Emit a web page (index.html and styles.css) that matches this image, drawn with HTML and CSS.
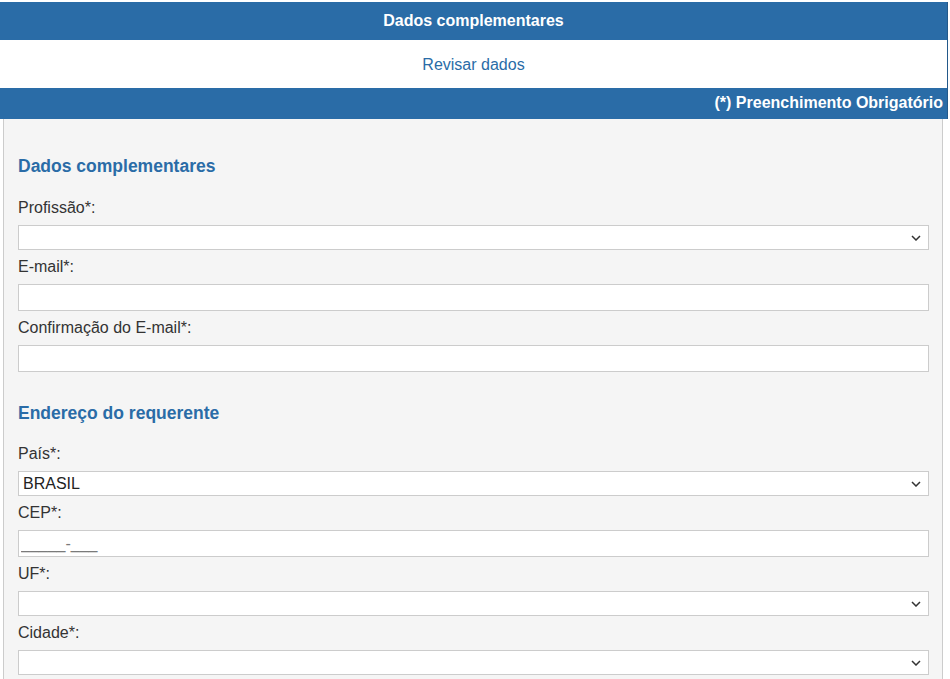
FILE: index.html
```html
<!DOCTYPE html>
<html lang="pt-BR">
<head>
<meta charset="utf-8">
<title>Dados complementares</title>
<link rel="stylesheet" href="styles.css">
</head>
<body>
<div class="page">
  <div class="frame">
    <div class="bar bar-title">Dados complementares</div>
    <div class="review"><a href="#" class="review-link">Revisar dados</a></div>
    <div class="bar bar-note">(*) Preenchimento Obrigatório</div>
  </div>
  <div class="panel">
    <h2 class="section-title first">Dados complementares</h2>
    <div class="field">
      <label class="label">Profissão*:</label>
      <div class="select-wrap">
        <select class="select"><option></option></select>
        <svg class="chevron" width="10" height="6" viewBox="0 0 10 6"><path d="M1 1 L5 5 L9 1" fill="none" stroke="#333" stroke-width="1.5"/></svg>
      </div>
    </div>
    <div class="field">
      <label class="label">E-mail*:</label>
      <input class="input" type="text">
    </div>
    <div class="field">
      <label class="label">Confirmação do E-mail*:</label>
      <input class="input" type="text">
    </div>

    <h2 class="section-title">Endereço do requerente</h2>
    <div class="field">
      <label class="label">País*:</label>
      <div class="select-wrap">
        <select class="select"><option>BRASIL</option></select>
        <svg class="chevron" width="10" height="6" viewBox="0 0 10 6"><path d="M1 1 L5 5 L9 1" fill="none" stroke="#333" stroke-width="1.5"/></svg>
      </div>
    </div>
    <div class="field">
      <label class="label">CEP*:</label>
      <input class="input cep" type="text" placeholder="_____-___">
    </div>
    <div class="field">
      <label class="label">UF*:</label>
      <div class="select-wrap">
        <select class="select"><option></option></select>
        <svg class="chevron" width="10" height="6" viewBox="0 0 10 6"><path d="M1 1 L5 5 L9 1" fill="none" stroke="#333" stroke-width="1.5"/></svg>
      </div>
    </div>
    <div class="field">
      <label class="label">Cidade*:</label>
      <div class="select-wrap">
        <select class="select"><option></option></select>
        <svg class="chevron" width="10" height="6" viewBox="0 0 10 6"><path d="M1 1 L5 5 L9 1" fill="none" stroke="#333" stroke-width="1.5"/></svg>
      </div>
    </div>
  </div>
</div>
</body>
</html>
```
FILE: styles.css
```css
html, body {
  margin: 0;
  padding: 0;
  background: #ffffff;
}
body {
  font-family: "Liberation Sans", Arial, sans-serif;
  color: #333333;
  padding-top: 2px;
}
.page {
  width: 950px;
}
.frame {
  width: 947px;
  border-right: 1px solid #23598a;
}
.bar {
  background: #2a6ca7;
  color: #ffffff;
  font-weight: bold;
  font-size: 16px;
}
.bar-title {
  height: 38px;
  line-height: 38px;
  text-align: center;
}
.review {
  height: 48px;
  line-height: 49px;
  text-align: center;
  background: #ffffff;
}
.review-link {
  color: #2a6ca7;
  font-size: 16px;
  text-decoration: none;
}
.bar-note {
  height: 31px;
  line-height: 30px;
  text-align: right;
  padding-right: 4px;
}
.panel {
  margin-left: 3px;
  width: 911px;
  background: #f5f5f5;
  border-left: 1px solid #cccccc;
  border-right: 1px solid #cccccc;
  padding: 0 13px 20px 14px;
  min-height: 600px;
}
.section-title {
  margin: 0;
  color: #2a6ca7;
  font-size: 17.5px;
  font-weight: bold;
  line-height: 20px;
  padding-top: 31px;
  padding-bottom: 14px;
}
.section-title.first {
  padding-top: 37px;
  padding-bottom: 15px;
}
.field {
  display: flex;
  flex-direction: column;
}
.label {
  font-size: 16px;
  line-height: 18px;
  padding: 8px 0;
  color: #333333;
}
.input {
  box-sizing: border-box;
  height: 27px;
  width: 100%;
  margin: 0;
  border: 1px solid #cccccc;
  background: #ffffff;
  font-family: "Liberation Sans", Arial, sans-serif;
  font-size: 16px;
  padding: 0 2px;
  color: #333333;
  outline: none;
}
.input::placeholder {
  color: #7a7a7a;
  opacity: 1;
}
.select-wrap {
  position: relative;
  display: flex;
}
.select {
  box-sizing: border-box;
  height: 25px;
  width: 100%;
  margin: 0;
  border: 1px solid #cccccc;
  border-radius: 0;
  background-color: #ffffff;
  font-family: "Liberation Sans", Arial, sans-serif;
  font-size: 16px;
  color: #222222;
  padding: 0 4px;
  -webkit-appearance: none;
  appearance: none;
}
.chevron {
  position: absolute;
  right: 8px;
  top: 10px;
  pointer-events: none;
}
```
